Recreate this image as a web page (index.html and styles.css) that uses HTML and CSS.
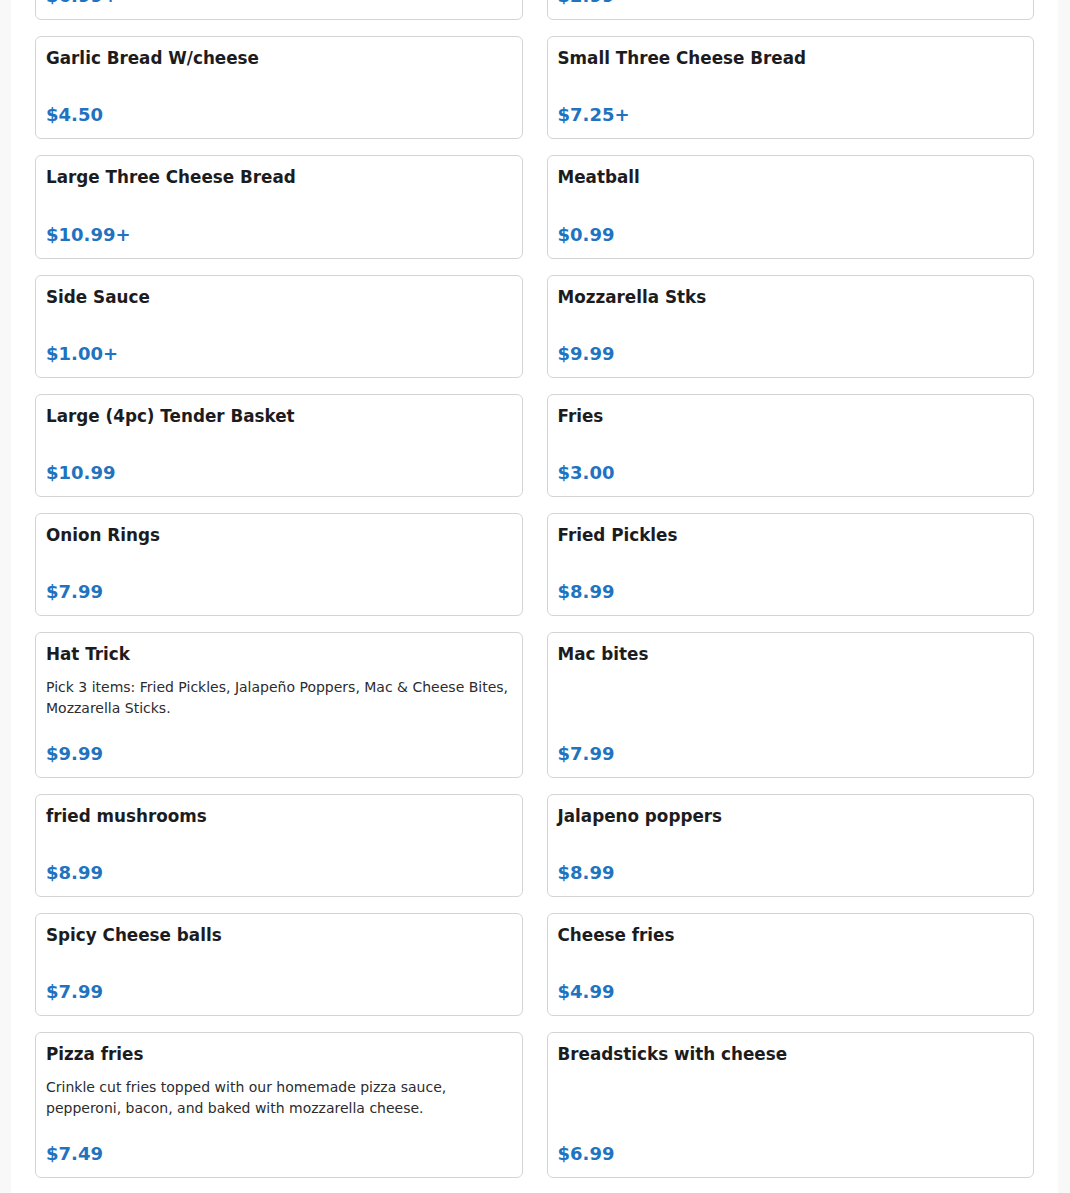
FILE: index.html
```html
<!DOCTYPE html>
<html lang="en">
<head>
<meta charset="utf-8">
<title>Menu</title>
<link rel="stylesheet" href="styles.css">
</head>
<body>
<main class="page">
  <div class="grid">
    <div class="card"><div class="title">Cheesy Bread</div><div class="desc"></div><div class="price">$6.99+</div></div>
    <div class="card"><div class="title">Garlic Knots</div><div class="desc"></div><div class="price">$2.99</div></div>
    <div class="card"><div class="title">Garlic Bread W/cheese</div><div class="desc"></div><div class="price">$4.50</div></div>
    <div class="card"><div class="title">Small Three Cheese Bread</div><div class="desc"></div><div class="price">$7.25+</div></div>
    <div class="card"><div class="title">Large Three Cheese Bread</div><div class="desc"></div><div class="price">$10.99+</div></div>
    <div class="card"><div class="title">Meatball</div><div class="desc"></div><div class="price">$0.99</div></div>
    <div class="card"><div class="title">Side Sauce</div><div class="desc"></div><div class="price">$1.00+</div></div>
    <div class="card"><div class="title">Mozzarella Stks</div><div class="desc"></div><div class="price">$9.99</div></div>
    <div class="card"><div class="title">Large (4pc) Tender Basket</div><div class="desc"></div><div class="price">$10.99</div></div>
    <div class="card"><div class="title">Fries</div><div class="desc"></div><div class="price">$3.00</div></div>
    <div class="card"><div class="title">Onion Rings</div><div class="desc"></div><div class="price">$7.99</div></div>
    <div class="card"><div class="title">Fried Pickles</div><div class="desc"></div><div class="price">$8.99</div></div>
    <div class="card"><div class="title">Hat Trick</div><div class="desc">Pick 3 items: Fried Pickles, Jalapeño Poppers, Mac &amp; Cheese Bites, Mozzarella Sticks.</div><div class="price">$9.99</div></div>
    <div class="card"><div class="title">Mac bites</div><div class="desc"></div><div class="price">$7.99</div></div>
    <div class="card"><div class="title">fried mushrooms</div><div class="desc"></div><div class="price">$8.99</div></div>
    <div class="card"><div class="title">Jalapeno poppers</div><div class="desc"></div><div class="price">$8.99</div></div>
    <div class="card"><div class="title">Spicy Cheese balls</div><div class="desc"></div><div class="price">$7.99</div></div>
    <div class="card"><div class="title">Cheese fries</div><div class="desc"></div><div class="price">$4.99</div></div>
    <div class="card"><div class="title">Pizza fries</div><div class="desc">Crinkle cut fries topped with our homemade pizza sauce, pepperoni, bacon, and baked with mozzarella cheese.</div><div class="price">$7.49</div></div>
    <div class="card"><div class="title">Breadsticks with cheese</div><div class="desc"></div><div class="price">$6.99</div></div>
  </div>
</main>
</body>
</html>
```

FILE: styles.css
```css
html, body {
  margin: 0;
  padding: 0;
}
body {
  background: #f8f8f9;
  font-family: "DejaVu Sans", sans-serif;
  color: #1c1c1e;
  overflow: hidden;
}
.page {
  width: 1047px;
  margin: 0 0 0 11px;
  background: #ffffff;
  padding: 0 24px 40px;
  box-sizing: border-box;
}
.grid {
  display: grid;
  grid-template-columns: 1fr 1fr;
  column-gap: 24px;
  row-gap: 16px;
  margin-top: -83.3px;
}
.card {
  border: 1px solid #d4d4d6;
  border-radius: 6px;
  padding: 10px;
  display: flex;
  flex-direction: column;
  background: #fff;
}
.title {
  font-size: 16.8px;
  font-weight: bold;
  line-height: 23px;
  color: #1c1c1e;
}
.desc {
  font-size: 14px;
  line-height: 21px;
  color: #2c2c2e;
  margin-top: 11px;
  flex: 1;
}
.price {
  font-size: 18px;
  font-weight: bold;
  line-height: 26px;
  color: #1f73bf;
  margin-top: 21.3px;
}
```
